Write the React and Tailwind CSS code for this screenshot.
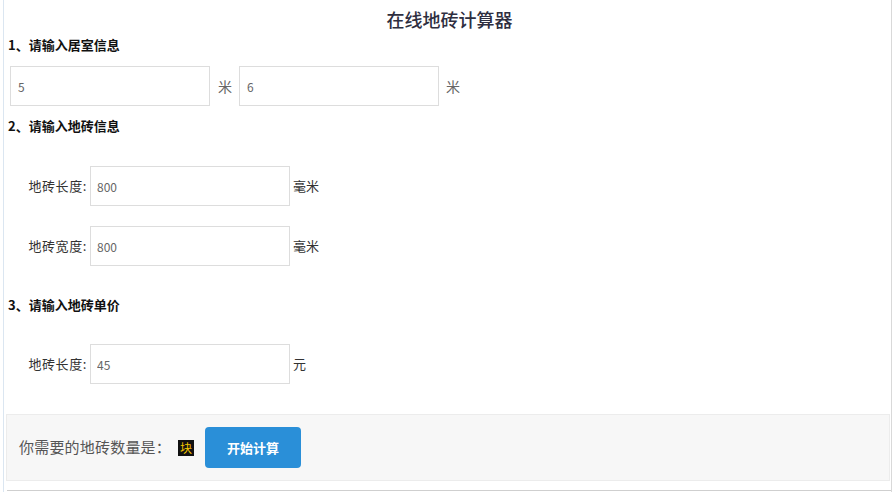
import React from 'react';

const font = { fontFamily: '"Noto Sans CJK SC", "Microsoft YaHei", sans-serif' };

const Field = ({ label, value, unit, className = '' }) => (
  <div className={`flex items-center h-[40px] ${className}`}>
    <span className="w-[86px] pr-[3px] text-right text-[13px] tracking-[0.6px] text-[#333]">{label}</span>
    <input
      readOnly
      value={value}
      className="w-[200px] h-[40px] border border-[#ddd] pl-[6px] text-[12px] text-[#666] outline-none bg-white"
      style={font}
    />
    <span className="ml-[3px] text-[13px] text-[#333]">{unit}</span>
  </div>
);

const App = () => {
  return (
    <div className="w-[894px] h-[492px] bg-white overflow-hidden" style={font}>
      <div className="ml-[3px] w-[889px] h-[492px] border-l border-[#dbe6f1] border-r border-r-[#d9d9d9] flex flex-col">
        {/* Title */}
        <h1 className="mt-[7px] h-[24px] leading-[24px] text-center text-[18px] font-medium text-[#2e2e40] pl-[4px]">
          在线地砖计算器
        </h1>

        {/* Section 1 */}
        <h2 className="mt-[4px] h-[20px] leading-[20px] ml-[4px] text-[13px] font-bold text-[#111]">
          1、请输入居室信息
        </h2>
        <div className="mt-[11px] ml-[6px] flex items-center h-[40px]">
          <input
            readOnly
            value="5"
            className="w-[200px] h-[40px] border border-[#ddd] pl-[7px] text-[12px] text-[#666] outline-none"
            style={font}
          />
          <span className="ml-[8px] text-[14px] text-[#666]">米</span>
          <input
            readOnly
            value="6"
            className="ml-[7px] w-[200px] h-[40px] border border-[#ddd] pl-[7px] text-[12px] text-[#666] outline-none"
            style={font}
          />
          <span className="ml-[7px] text-[14px] text-[#666]">米</span>
        </div>

        {/* Section 2 */}
        <h2 className="mt-[10px] h-[20px] leading-[20px] ml-[4px] text-[13px] font-bold text-[#111]">
          2、请输入地砖信息
        </h2>
        <Field label="地砖长度:" value="800" unit="毫米" className="mt-[30px]" />
        <Field label="地砖宽度:" value="800" unit="毫米" className="mt-[20px]" />

        {/* Section 3 */}
        <h2 className="mt-[29px] h-[20px] leading-[20px] ml-[4px] text-[13px] font-bold text-[#111]">
          3、请输入地砖单价
        </h2>
        <Field label="地砖长度:" value="45" unit="元" className="mt-[29px]" />

        {/* Result */}
        <div className="mt-[30px] ml-[2px] w-[884px] h-[67px] bg-[#f7f7f7] border border-[#ececec] flex items-center pl-[12px]">
          <span className="text-[15px] tracking-[0.2px] text-[#555]">你需要的地砖数量是：</span>
          <span className="ml-[7px] w-[16px] h-[16px] bg-[#111] text-[#f2c500] text-[12px] leading-[16px] text-center">块</span>
          <button className="ml-[11px] w-[96px] h-[41px] rounded-[4px] bg-[#2a8fd8] text-white text-[13px] font-bold" style={font}>
            开始计算
          </button>
        </div>

        <div className="mt-auto mb-[1px] ml-[3px] border-b border-[#cfcfcf]" />
      </div>
    </div>
  );
};

export default App;
